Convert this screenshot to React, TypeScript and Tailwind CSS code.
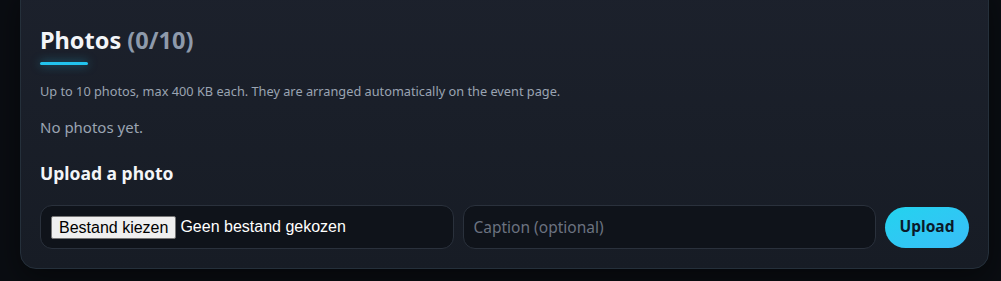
export default function App() {
  return (
    <div
      className="min-h-screen bg-[#0a0d12] pl-5 pr-3 pb-3 overflow-hidden"
      style={{ fontFamily: '"Noto Sans", "Open Sans", sans-serif' }}
    >
      <section className="-mt-4 rounded-2xl border border-[#25303b] bg-gradient-to-b from-[#1c212c] to-[#171c25] px-[19px] pt-[39px] pb-[19px] shadow-[0_10px_30px_rgba(0,0,0,0.45)]">
        <h2 className="text-[23.5px] leading-8 font-bold text-[#f3f5f8]">
          Photos <span className="text-[#8e9aab]">(0/10)</span>
        </h2>
        <div className="mt-[6px] h-[3px] w-12 rounded-full bg-[#22c3ee] shadow-[0_0_10px_rgba(34,195,238,0.55)]" />

        <p className="mt-[16px] text-[12.75px] leading-5 text-[#9aa4b2]">
          Up to 10 photos, max 400 KB each. They are arranged automatically on the event page.
        </p>
        <p className="mt-[14px] text-[15px] leading-6 text-[#9aa4b2]">No photos yet.</p>

        <h3 className="mt-[22px] text-[17.5px] leading-6 font-bold text-[#f3f5f8]">Upload a photo</h3>

        <div className="mt-[20px] flex items-center gap-[9px]">
          <label className="flex h-11 flex-1 items-center rounded-xl border border-[#2a313c] bg-[#0f131a] px-[10px]">
            <span
              className="h-[23px] border border-[#767676] bg-[#efefef] px-[7px] text-[16px] leading-[21px] text-black rounded-[2px]"
              style={{ fontFamily: '"Liberation Sans", Arial, sans-serif' }}
            >
              Bestand kiezen
            </span>
            <span
              className="ml-[4px] text-[16px] text-white"
              style={{ fontFamily: '"Liberation Sans", Arial, sans-serif' }}
            >
              Geen bestand gekozen
            </span>
            <input type="file" className="hidden" />
          </label>
          <input
            placeholder="Caption (optional)"
            className="h-11 flex-1 rounded-xl border border-[#2a313c] bg-[#0f131a] px-[10px] text-[15.5px] text-[#e5e7eb] placeholder:text-[#6b7280] outline-none"
          />
          <button className="h-[41px] w-[84px] rounded-full bg-gradient-to-br from-[#22d3ee] to-[#38bdf8] text-[15.5px] font-bold text-[#0b1a2a]">
            Upload
          </button>
        </div>
      </section>
    </div>
  );
}
